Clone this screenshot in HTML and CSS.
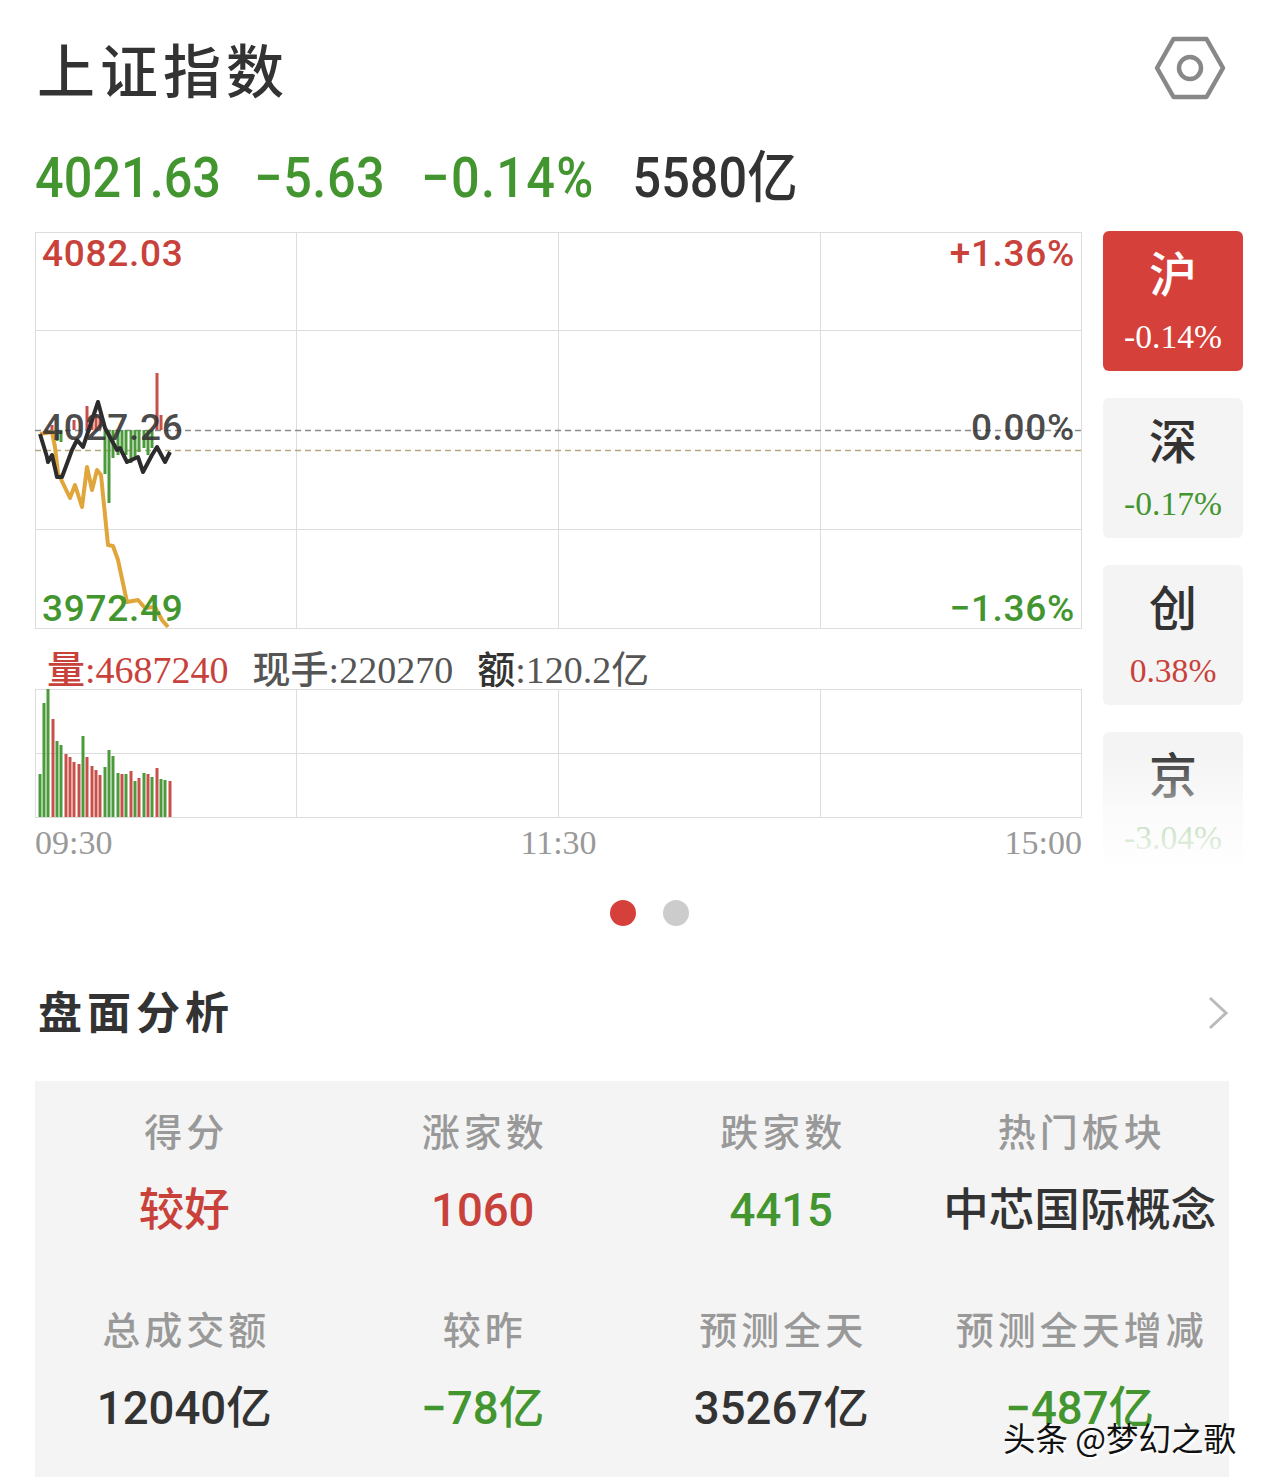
FILE: index.html
```html
<!DOCTYPE html>
<html lang="zh-CN">
<head>
    <meta charset="UTF-8">
    <meta name="viewport" content="width=device-width, initial-scale=1.0">
    <title>上证指数</title>
    <link rel="stylesheet" href="styles.css">
</head>
<body>
    <header class="header">
        <h1 class="title">上证指数</h1>
        <svg class="hex-icon" viewBox="0 0 74 66" width="74" height="66">
            <path d="M4 33 20.500 4H53.500L70 33 53.500 62H20.500Z" fill="none" stroke="#888" stroke-width="4.500" stroke-linejoin="round"/>
            <circle cx="37" cy="33" r="11" fill="none" stroke="#888" stroke-width="4.500"/>
        </svg>
    </header>

    <div class="quote">
        <span class="green">4021.63</span>
        <span class="green quote-change">−5.63</span>
        <span class="green quote-pct">−0.14%</span>
        <span class="quote-amount">5580亿</span>
    </div>

    <div class="main">
        <div class="charts">
            <div class="price-chart">
                <svg class="chart-svg" viewBox="35 232 1047 397" width="1047" height="397">
                    <path class="grid" d="M35.500 232V628M296.500 232V628M558.500 232V628M820.500 232V628M1081.500 232V628M35 232.500H1082M35 330.500H1082M35 529.500H1082M35 628.500H1082"/>
                    <path d="M35 430.500H1082" class="dash-grey"/>
                    <path d="M35 450.500H1082" class="dash-tan"/>
                    <path class="bar-red" d="M52 430V425M74 430V420M87 430V406M92 430V416M96 430V414M100 430V416M157 430V373M161 430V415"/>
                    <path class="bar-green" d="M57 430V441M61 430V442M105 430V474M109 430V503M113 430V458M118 430V455M122 430V450M126 430V455M131 430V463M135 430V458M139 430V452M144 430V448M148 430V455M152 430V448"/>
                    <polyline class="line-orange" points="40,434 52,432 55,447 58,473 70,498 75,485 82,507 87,467 92,490 97,470 101,475 108,545 113,546 118,560 127,602 138,600 145,608 155,607 162,620 168,627"/>
                    <polyline class="line-black" points="40,434 47,457 48,462 52,455 57,477 62,477 72,450 77,440 83,447 98,402 105,428 117,450 120,448 127,462 138,457 143,472 152,455 157,447 165,462 170,452"/>
                </svg>
                <span class="tick tick-top red">4082.03</span>
                <span class="tick tick-top tick-right red">+1.36%</span>
                <span class="tick tick-mid dark">4027.26</span>
                <span class="tick tick-mid tick-right dark">0.00%</span>
                <span class="tick tick-low green">3972.49</span>
                <span class="tick tick-low tick-right green">−1.36%</span>
            </div>

            <div class="legend">
                <span class="red"><b>量</b>:4687240</span>
                <span class="grey-dark"><b>现手</b>:220270</span>
                <span class="grey-dark"><b class="legend-dark">额</b>:120.2亿</span>
            </div>

            <svg class="volume-svg" viewBox="35 689 1047 129" width="1047" height="129">
                <path class="grid" d="M35.500 689V817M296.500 689V817M558.500 689V817M820.500 689V817M1081.500 689V817M35 689.500H1082M35 753.500H1082M35 817.500H1082"/>
                <path class="bar-green" d="M40 817V774M44 817V703M48 817V689M57 817V741M61 817V745M83 817V736M105 817V767M109 817V750M113 817V756M118 817V773M126 817V774M135 817V781M144 817V773M152 817V777M161 817V779M165 817V780"/>
                <path class="bar-red" d="M53 817V719M66 817V754M70 817V757M74 817V762M79 817V764M87 817V757M92 817V766M96 817V770M100 817V775M122 817V774M131 817V771M139 817V778M148 817V774M157 817V768M170 817V781"/>
            </svg>

            <div class="times">
                <span>09:30</span>
                <span>11:30</span>
                <span>15:00</span>
            </div>
        </div>

        <div class="tabs">
            <div class="tab active"><span class="tab-name">沪</span><span class="tab-pct">-0.14%</span></div>
            <div class="tab"><span class="tab-name">深</span><span class="tab-pct green">-0.17%</span></div>
            <div class="tab"><span class="tab-name">创</span><span class="tab-pct red">0.38%</span></div>
            <div class="tab tab-fade"><span class="tab-name">京</span><span class="tab-pct green">-3.04%</span></div>
        </div>
    </div>

    <div class="dots">
        <span class="dot dot-on"></span>
        <span class="dot"></span>
    </div>

    <div class="section-head">
        <h2 class="section-title">盘面分析</h2>
        <svg class="chevron" viewBox="0 0 20 34" width="20" height="34">
            <path d="M2 2 18 17 2 32" fill="none" stroke="#bbb" stroke-width="3"/>
        </svg>
    </div>

    <div class="panel">
        <div class="cell"><div class="label">得分</div><div class="value red">较好</div></div>
        <div class="cell"><div class="label">涨家数</div><div class="value red">1060</div></div>
        <div class="cell"><div class="label">跌家数</div><div class="value green">4415</div></div>
        <div class="cell"><div class="label">热门板块</div><div class="value">中芯国际概念</div></div>
        <div class="cell"><div class="label">总成交额</div><div class="value">12040亿</div></div>
        <div class="cell"><div class="label">较昨</div><div class="value green">−78亿</div></div>
        <div class="cell"><div class="label">预测全天</div><div class="value">35267亿</div></div>
        <div class="cell"><div class="label">预测全天增减</div><div class="value green">−487亿</div></div>
    </div>

    <div class="watermark">头条 @梦幻之歌</div>
</body>
</html>
```

FILE: styles.css
```css
* {
    box-sizing: border-box;
}
html, body {
    margin: 0;
    height: 1484px;
    overflow: hidden;
}
body {
    position: relative;
    background-color: #fff;
    color: #333;
    font-family: Roboto, "Noto Sans CJK SC", sans-serif;
}
.red {
    color: #c8423b;
}
.green {
    color: #43962f;
}
.dark {
    color: rgba(51, 51, 51, 0.88);
}
.grey-dark {
    color: #555;
}

.header {
    display: flex;
    justify-content: space-between;
    align-items: center;
    height: 148px;
    padding: 0 37px 12px 37px;
}
.title {
    margin: 0;
    font-size: 58px;
    font-weight: 500;
    letter-spacing: 5px;
    line-height: 74px;
    font-family: "Noto Sans CJK SC", sans-serif;
}

.quote {
    display: flex;
    gap: 37px;
    height: 60px;
    padding-left: 39px;
    font-size: 56px;
    font-weight: 500;
    line-height: 60px;
    white-space: nowrap;
    transform: scaleX(0.9);
    transform-origin: 0 0;
}
.quote-change {
    letter-spacing: 0.6px;
}
.quote-pct {
    margin-left: 3px;
    letter-spacing: 1.500px;
}
.quote-amount {
    margin-left: 5px;
}

.main {
    display: flex;
    align-items: flex-start;
    gap: 21px;
    height: 641px;
    margin-top: 23px;
    padding-left: 35px;
}
.charts {
    width: 1047px;
    padding-top: 1px;
}
.price-chart {
    position: relative;
    height: 397px;
}
.chart-svg, .volume-svg {
    display: block;
}
.grid {
    fill: none;
    stroke: #ddd;
    stroke-width: 1;
}
.dash-grey, .dash-tan {
    fill: none;
    stroke-width: 1.500;
    stroke-dasharray: 6 4;
}
.dash-grey {
    stroke: #8a8a8a;
}
.dash-tan {
    stroke: #b9a77f;
}
.bar-red, .bar-green {
    fill: none;
    stroke-width: 3;
}
.bar-red {
    stroke: #c8504a;
}
.bar-green {
    stroke: #4d9a3c;
}
.line-orange, .line-black {
    fill: none;
    stroke-width: 4;
    stroke-linejoin: round;
}
.line-orange {
    stroke: #e0a63c;
}
.line-black {
    stroke: #2c2c2c;
}

.tick {
    position: absolute;
    left: 7px;
    font-size: 37px;
    font-weight: 500;
    line-height: 44px;
    letter-spacing: 0.7px;
}
.tick-right {
    left: auto;
    right: 7px;
}
.tick-top {
    top: 0;
}
.tick-mid {
    top: 174px;
}
.tick-low {
    top: 355px;
}

.legend {
    display: flex;
    gap: 24px;
    height: 60px;
    padding: 19px 0 0 12px;
    font-family: "Liberation Serif", "Noto Sans CJK SC", serif;
    font-size: 38px;
    line-height: 44px;
    white-space: nowrap;
}
.legend b {
    font-weight: 500;
}
.legend .legend-dark {
    color: #333;
}

.times {
    display: flex;
    justify-content: space-between;
    padding-top: 4px;
    font-family: "Liberation Serif", serif;
    font-size: 34px;
    line-height: 42px;
    color: #999;
}

.tabs {
    display: flex;
    flex-direction: column;
    gap: 27px;
}
.tab {
    display: flex;
    flex-direction: column;
    align-items: center;
    width: 140px;
    height: 140px;
    padding-top: 9px;
    border-radius: 6px;
    background-color: #f4f4f4;
}
.tab.active {
    background-color: #d5413a;
    color: #fff;
}
.tab-name {
    font-family: "Noto Sans CJK SC", sans-serif;
    font-size: 48px;
    font-weight: 500;
    line-height: 62px;
}
.tab-pct {
    margin-top: 13px;
    font-family: "Liberation Serif", serif;
    font-size: 33.600px;
    line-height: 44px;
}
.tab-fade {
    position: relative;
}
.tab-fade::after {
    content: "";
    position: absolute;
    left: 0;
    right: 0;
    top: 20px;
    bottom: 0;
    background: linear-gradient(to bottom, rgba(255, 255, 255, 0), rgba(255, 255, 255, 0.7) 60%, #fff);
}

.dots {
    display: flex;
    justify-content: center;
    gap: 27px;
    width: 1264px;
    height: 26px;
    margin-top: 28px;
    padding-left: 35px;
}
.dot {
    width: 26px;
    height: 26px;
    border-radius: 50%;
    background-color: #ccc;
}
.dot-on {
    background-color: #d5413a;
}

.section-head {
    display: flex;
    justify-content: space-between;
    align-items: center;
    height: 54px;
    margin-top: 60px;
    padding: 0 36px 0 38px;
}
.section-title {
    margin: 0 0 6px;
    font-family: "Noto Sans CJK SC", sans-serif;
    font-size: 44px;
    font-weight: 700;
    letter-spacing: 5px;
    line-height: 48px;
}

.panel {
    display: grid;
    grid-template-columns: repeat(4, 1fr);
    align-content: start;
    row-gap: 62px;
    width: 1194px;
    height: 396px;
    margin: 41px 0 0 35px;
    padding-top: 24px;
    background-color: #f4f4f4;
}
.cell {
    text-align: center;
    white-space: nowrap;
}
.label {
    padding-left: 4px;
    font-family: "Noto Sans CJK SC", sans-serif;
    font-size: 38px;
    font-weight: 500;
    letter-spacing: 4px;
    line-height: 50px;
    color: #999;
}
.value {
    margin-top: 26px;
    font-size: 45.500px;
    font-weight: 500;
    line-height: 60px;
}

.watermark {
    position: absolute;
    left: 1003px;
    top: 1417px;
    font-family: "Noto Sans CJK SC", sans-serif;
    font-size: 32.500px;
    line-height: 40px;
    color: #111;
    white-space: nowrap;
    text-shadow: 1px 1px 0 #fff, 2px 2px 1px #fff;
}
```
